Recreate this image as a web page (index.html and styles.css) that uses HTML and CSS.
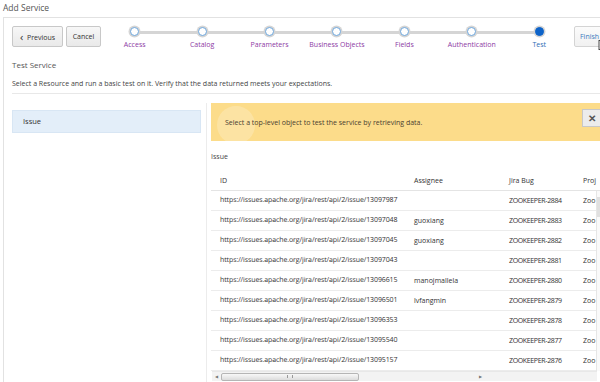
FILE: index.html
```html
<!DOCTYPE html>
<html>
<head>
<meta charset="utf-8">
<link rel="stylesheet" href="styles.css">
</head>
<body>
<div class="title">Add Service</div>
<div class="panel">
  <div class="toolbar">
    <button class="btn prev"><span class="chev">&lsaquo;</span> Previous</button>
    <button class="btn cancel">Cancel</button>
    <div class="train">
      <div class="train-line"></div>
      <div class="step"><span class="dot"></span><span class="lbl">Access</span></div>
      <div class="step"><span class="dot"></span><span class="lbl">Catalog</span></div>
      <div class="step"><span class="dot"></span><span class="lbl">Parameters</span></div>
      <div class="step"><span class="dot"></span><span class="lbl">Business Objects</span></div>
      <div class="step"><span class="dot"></span><span class="lbl">Fields</span></div>
      <div class="step"><span class="dot"></span><span class="lbl">Authentication</span></div>
      <div class="step current"><span class="dot"></span><span class="lbl">Test</span></div>
    </div>
    <button class="btn finish">Finish</button>
    <svg class="cursor" width="10" height="14" viewBox="0 0 10 14"><path d="M1 1 L1 11 L3.5 8.6 L5.3 12.6 L6.8 11.9 L5.1 8 L8.5 8 Z" fill="#fff" stroke="#333" stroke-width="0.9" stroke-linejoin="round"/></svg>
  </div>
  <div class="heading">Test Service</div>
  <div class="desc">Select a Resource and run a basic test on it. Verify that the data returned meets your expectations.</div>
  <div class="rule"></div>
  <div class="content">
    <div class="left">
      <div class="item">Issue</div>
    </div>
    <div class="right">
      <div class="msg">
        <span class="glow"></span>
        <span class="msg-text">Select a top-level object to test the service by retrieving data.</span>
        <span class="close">&#x2715;</span>
      </div>
      <div class="cap">Issue</div>
      <div class="grid">
        <table>
          <thead>
            <tr><th class="c1">ID</th><th class="c2">Assignee</th><th class="c3">Jira Bug</th><th class="c4">Proj</th></tr>
          </thead>
          <tbody>
            <tr><td class="url">https://issues.apache.org/jira/rest/api/2/issue/13097987</td><td></td><td class="bug">ZOOKEEPER-2884</td><td>Zoo</td></tr>
            <tr><td class="url">https://issues.apache.org/jira/rest/api/2/issue/13097048</td><td>guoxiang</td><td class="bug">ZOOKEEPER-2883</td><td>Zoo</td></tr>
            <tr><td class="url">https://issues.apache.org/jira/rest/api/2/issue/13097045</td><td>guoxiang</td><td class="bug">ZOOKEEPER-2882</td><td>Zoo</td></tr>
            <tr><td class="url">https://issues.apache.org/jira/rest/api/2/issue/13097043</td><td></td><td class="bug">ZOOKEEPER-2881</td><td>Zoo</td></tr>
            <tr><td class="url">https://issues.apache.org/jira/rest/api/2/issue/13096615</td><td>manojmallela</td><td class="bug">ZOOKEEPER-2880</td><td>Zoo</td></tr>
            <tr><td class="url">https://issues.apache.org/jira/rest/api/2/issue/13096501</td><td>lvfangmin</td><td class="bug">ZOOKEEPER-2879</td><td>Zoo</td></tr>
            <tr><td class="url">https://issues.apache.org/jira/rest/api/2/issue/13096353</td><td></td><td class="bug">ZOOKEEPER-2878</td><td>Zoo</td></tr>
            <tr><td class="url">https://issues.apache.org/jira/rest/api/2/issue/13095540</td><td></td><td class="bug">ZOOKEEPER-2877</td><td>Zoo</td></tr>
            <tr><td class="url">https://issues.apache.org/jira/rest/api/2/issue/13095157</td><td></td><td class="bug">ZOOKEEPER-2876</td><td>Zoo</td></tr>
          </tbody>
        </table>
        <div class="vscroll"><span class="vthumb"></span></div>
        <div class="hscroll">
          <span class="arrow">&#9664;</span>
          <span class="hthumb"><span class="grip"></span></span>
          <span class="arrow right">&#9654;</span>
        </div>
      </div>
    </div>
  </div>
</div>
</body>
</html>
```

FILE: styles.css
```css
html, body {
  margin: 0;
  padding: 0;
  background: #fff;
  overflow: hidden;
}
body {
  width: 600px;
  height: 382px;
  font-family: "Open Sans", "Noto Sans", sans-serif;
  font-size: 7px;
  color: #333;
}
.title {
  height: 17px;
  line-height: 15px;
  padding-left: 3px;
  font-size: 8.5px;
  color: #555;
}
.panel {
  margin-left: 3px;
  border-left: 1px solid #e2e2e2;
  border-top: 1px solid #e2e2e2;
  height: 364px;
  padding-left: 8px;
  overflow: hidden;
}
.toolbar {
  position: relative;
  display: flex;
  align-items: flex-start;
  padding-top: 8px;
  height: 30px;
}
.btn {
  flex-shrink: 0;
  font-family: inherit;
  font-size: 7px;
  color: #333;
  height: 21px;
  padding: 0 6px;
  border: 1px solid #c8c8c8;
  border-radius: 2px;
  background: linear-gradient(#f7f7f7, #e9e9e9);
  margin: 0;
}
.prev {
  width: 51px;
  padding: 0 4px;
}
.chev {
  font-size: 11px;
  line-height: 7px;
  position: relative;
  top: 1px;
  margin-right: 2px;
}
.cancel {
  width: 35px;
  margin-left: 3px;
  padding: 0;
}
.train {
  flex-shrink: 0;
  position: relative;
  display: flex;
  width: 472px;
  margin-top: 1px;
}
.train-line {
  position: absolute;
  left: 34px;
  right: 34px;
  top: 4px;
  height: 3px;
  background: #d5d5d5;
}
.step {
  position: relative;
  flex: 1;
  display: flex;
  flex-direction: column;
  align-items: center;
}
.dot {
  width: 7px;
  height: 7px;
  border-radius: 50%;
  background: #fff;
  border: 1.5px solid #6ea7dd;
  box-shadow: 0 0 0 1.5px #d5d5d5;
}
.lbl {
  margin-top: 4px;
  color: #8d3aa4;
  white-space: nowrap;
  font-size: 7px;
}
.current .dot {
  background: #0d63c9;
  border-color: #0d63c9;
}
.current .lbl {
  color: #2d6eb5;
}
.finish {
  margin-left: 1px;
  width: 40px;
  color: #3a7cc0;
  text-align: left;
  padding-left: 5px;
  background: linear-gradient(#fbfbfb, #f1f1f1);
  border-color: #d4d4d4;
}
.cursor {
  position: absolute;
  left: 586px;
  top: 21px;
}
.heading {
  margin-top: 2px;
  height: 20px;
  line-height: 14px;
  font-size: 8px;
  color: #555;
}
.desc {
  height: 15px;
  line-height: 12px;
  color: #444;
}
.rule {
  height: 1px;
  background: #e8e8e8;
}
.content {
  display: flex;
  padding-top: 9px;
}
.left {
  width: 194px;
  padding-top: 7px;
  border-right: 1px solid #ececec;
  height: 280px;
}
.item {
  width: 189px;
  height: 23px;
  line-height: 21px;
  padding-left: 10px;
  box-sizing: border-box;
  background: #e3eef9;
  border: 1px solid #d8e6f4;
  font-size: 7.5px;
  color: #333;
}
.right {
  flex: 1;
  padding-left: 4px;
  overflow: hidden;
}
.msg {
  position: relative;
  height: 38px;
  background: #fcdc8a;
  display: flex;
  align-items: center;
  overflow: hidden;
}
.glow {
  position: absolute;
  left: 6px;
  top: 3px;
  width: 38px;
  height: 38px;
  border-radius: 50%;
  background: rgba(255, 255, 255, 0.22);
}
.msg-text {
  position: relative;
  padding-left: 14px;
  color: #4a4030;
}
.close {
  position: absolute;
  right: -2px;
  top: 6px;
  width: 18px;
  height: 16px;
  line-height: 16px;
  text-align: center;
  background: #ececec;
  border: 1px solid #c8c8c8;
  font-size: 10px;
  font-weight: bold;
  color: #555;
}
.cap {
  color: #444;
  height: 33px;
  line-height: 32px;
}
.grid {
  position: relative;
  height: 210px;
  overflow: hidden;
}
table {
  border-collapse: collapse;
  table-layout: fixed;
  width: 430px;
}
th, td {
  text-align: left;
  font-weight: normal;
  padding: 0 0 0 9px;
  white-space: nowrap;
  overflow: hidden;
  color: #333;
}
th {
  height: 16px;
  line-height: 14px;
  border-bottom: 1px solid #e4e4e4;
  vertical-align: top;
}
td {
  height: 19px;
  border-bottom: 1px solid #ececec;
}
td.url {
  text-rendering: geometricPrecision;
  letter-spacing: -0.1px;
}
td.bug {
  letter-spacing: -0.35px;
}
.c1 { width: 185px; }
.c2 { width: 86px; }
.c3 { width: 65px; }
.c4 { width: 60px; }
.vscroll {
  position: absolute;
  right: 0;
  top: 17px;
  width: 3px;
  height: 180px;
  border-left: 1px solid #e6e6e6;
  background: #fafafa;
}
.vthumb {
  display: block;
  width: 3px;
  height: 20px;
  margin-top: 6px;
  background: #e0e0e0;
}
.hscroll {
  position: absolute;
  left: 1px;
  right: 3px;
  top: 197px;
  height: 9px;
  background: #f3f3f3;
  border-top: 1px solid #e8e8e8;
  display: flex;
  align-items: center;
}
.arrow {
  font-size: 4px;
  color: #777;
  width: 9px;
  text-align: center;
}
.arrow.right {
  margin-left: auto;
}
.hthumb {
  width: 136px;
  height: 6px;
  border: 1px solid #b5b5b5;
  border-radius: 2px;
  background: linear-gradient(#f8f8f8, #dcdcdc);
  display: flex;
  align-items: center;
  justify-content: center;
}
.grip {
  width: 4px;
  height: 3px;
  border-left: 1px solid #999;
  border-right: 1px solid #999;
}
```
